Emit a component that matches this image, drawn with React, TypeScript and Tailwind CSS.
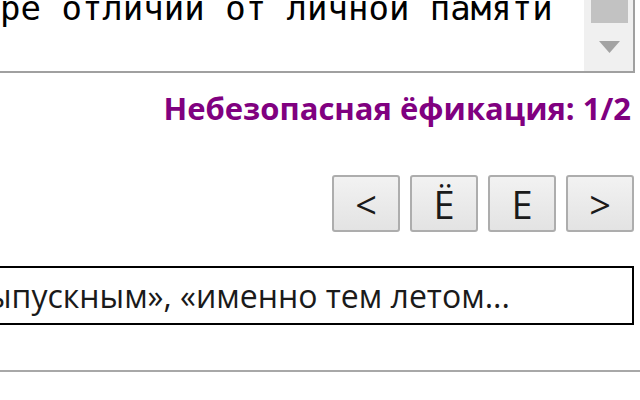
export default function App() {
  const buttons = ["<", "Ё", "Е", ">"];

  return (
    <div className="relative h-[400px] w-[640px] overflow-hidden bg-white">
      {/* поле с текстом и полосой прокрутки, верх и левый край за кадром */}
      <div className="-ml-[20px] -mt-[40px] flex h-[113px] w-[655px] border-b-2 border-r-2 border-[#a0a0a0]">
        <div className="flex-1 pl-[20px] pt-[31px] font-['DejaVu_Sans_Mono',monospace] text-[34px] leading-[34px] text-black whitespace-pre">
          ре отличий от личной памяти
        </div>
        <div className="flex w-[49px] flex-col items-center bg-[#f0f0f0]">
          <div className="ml-[2px] h-[63px] w-[37px] bg-[#c2c2c2]" />
          <svg className="ml-[2px] mt-[18px]" width="21" height="12" viewBox="0 0 21 12">
            <path d="M0 0 H21 L10.5 12 Z" fill="#a3a3a3" />
          </svg>
        </div>
      </div>

      <div className="mt-[16px] flex justify-end pr-[9px]">
        <span className="font-['Open_Sans',sans-serif] text-[31px] font-bold leading-[38px] text-[#800080]">
          Небезопасная ёфикация: 1/2
        </span>
      </div>

      <div className="mt-[48px] flex justify-end gap-[10px] pr-[6px]">
        {buttons.map((label) => (
          <button
            key={label}
            className="flex h-[57px] w-[68px] items-center justify-center rounded-[3px] border-2 border-[#adadad] bg-gradient-to-b from-[#f2f2f2] to-[#e3e3e3] font-['Open_Sans',sans-serif] text-[38px] leading-none text-[#1a1a1a]"
          >
            {label}
          </button>
        ))}
      </div>

      <div className="-ml-[20px] mt-[34px] flex h-[59px] w-[654px] items-center border-2 border-black">
        <span className="ml-[5px] font-['Open_Sans',sans-serif] text-[32px] leading-none text-[#1a1a1a] whitespace-pre">
          ыпускным», «именно тем летом...
        </span>
      </div>

      <div className="mt-[45px] h-[2px] w-full bg-[#a8a8a8]" />
    </div>
  );
}
